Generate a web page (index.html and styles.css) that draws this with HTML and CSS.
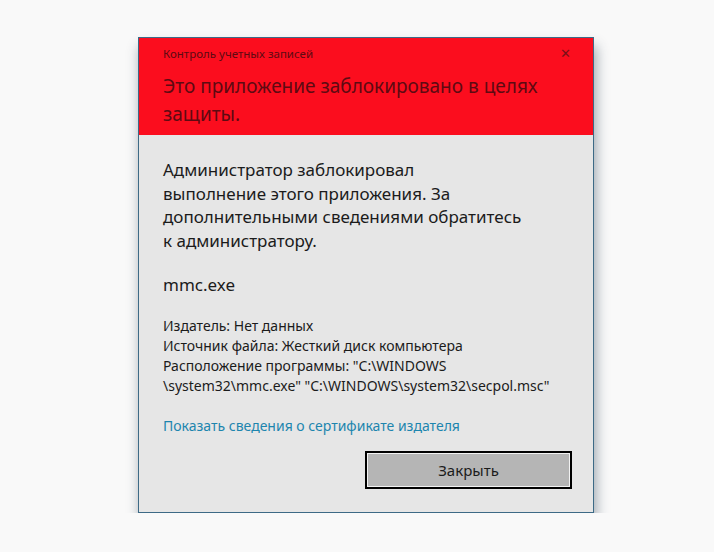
FILE: index.html
```html
<!DOCTYPE html>
<html>
  <head>
    <title>Контроль учетных записей</title>
    <link rel="stylesheet" href="styles.css">
  </head>
  <body>
    <div class="dialog">
      <div class="header">
        <div class="caption">
          <span>Контроль учетных записей</span>
          <span class="close">&#x2715;</span>
        </div>
        <h1>Это приложение заблокировано в целях<br>защиты.</h1>
      </div>
      <div class="content">
        <p class="message">Администратор заблокировал<br>выполнение этого приложения. За<br>дополнительными сведениями обратитесь<br>к администратору.</p>
        <p class="program">mmc.exe</p>
        <div class="details">
          <p>Издатель: Нет данных</p>
          <p>Источник файла: Жесткий диск компьютера</p>
          <p>Расположение программы: "C:\WINDOWS<br>\system32\mmc.exe" "C:\WINDOWS\system32\secpol.msc"</p>
        </div>
        <a class="cert-link" href="#">Показать сведения о сертификате издателя</a>
        <div class="buttons">
          <button>Закрыть</button>
        </div>
      </div>
    </div>
  </body>
</html>
```

FILE: styles.css
```css
* {
  box-sizing: border-box;
  margin: 0;
  padding: 0;
}

body {
  background-color: #f9f9f9;
  font-family: "Noto Sans", "Open Sans", sans-serif;
  color: #1b1b1b;
}

/* окно */
.dialog {
  width: 456px;
  height: 476px;
  margin: 37px 0 0 138px;
  border: 1px solid #3d6a86;
  background-color: #e6e6e6;
  box-shadow: 2px 9px 12px rgba(40, 60, 80, 0.45);
  display: flex;
  flex-direction: column;
}

.header {
  background-color: #fb0d1e;
  height: 97px;
  padding: 5px 22px 0 24px;
  color: #5e0a12;
}

.caption {
  display: flex;
  justify-content: space-between;
  align-items: center;
  font-size: 11.5px;
  height: 20px;
}

.close {
  font-size: 13px;
  color: #7a1018;
}

h1 {
  font-weight: normal;
  font-size: 19px;
  line-height: 28px;
  margin-top: 9px;
}

.content {
  flex: 1;
  padding: 23px 21px 0 24px;
  display: flex;
  flex-direction: column;
}

.message {
  font-size: 17px;
  line-height: 23.6px;
}

.program {
  font-size: 17px;
  margin-top: 21px;
}

.details {
  margin-top: 20px;
  font-size: 14px;
  line-height: 20px;
}

.cert-link {
  margin-top: 20px;
  font-size: 14px;
  color: #1d85ae;
  text-decoration: none;
}

.buttons {
  display: flex;
  justify-content: flex-end;
  margin-top: 16px;
}

button {
  width: 207px;
  height: 38px;
  border: 2px solid #000;
  box-shadow: inset 0 0 0 1px #f2f2f2;
  background-color: #b5b5b5;
  font-family: "Noto Sans", "Open Sans", sans-serif;
  font-size: 15px;
  color: #1b1b1b;
}
```
